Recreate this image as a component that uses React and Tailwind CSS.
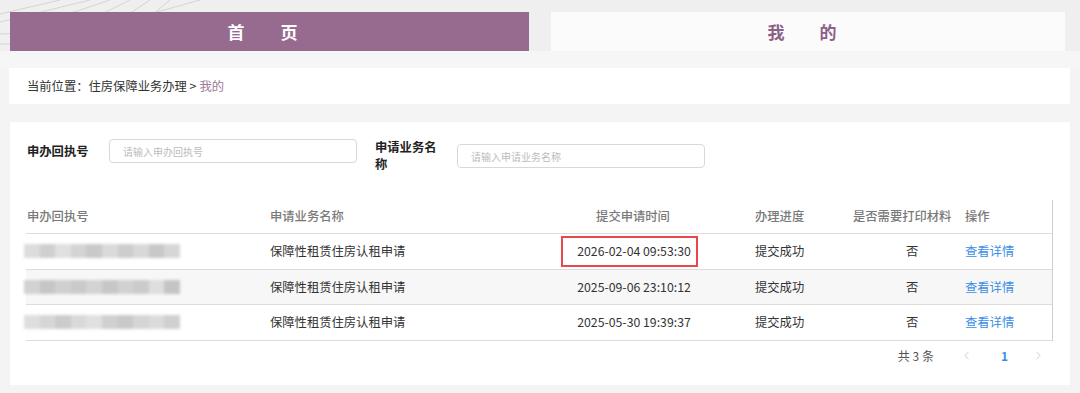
import { ChevronLeft, ChevronRight } from "lucide-react";

const rows = [
  { time: "2026-02-04 09:53:30", marked: true, stripe: false },
  { time: "2025-09-06 23:10:12", marked: false, stripe: true },
  { time: "2025-05-30 19:39:37", marked: false, stripe: false },
];

function Blurred({ shades }) {
  return (
    <div className="flex h-[14px] w-[156px] blur-[1.5px]">
      {shades.map((s, i) => (
        <div key={i} className="h-full flex-1" style={{ background: s }} />
      ))}
    </div>
  );
}

const shadeSets = [
  ["#dcdcdc", "#cfcfcf", "#e0e0e0", "#d4d4d4", "#c9c9c9", "#dadada", "#cdcdcd", "#d8d8d8", "#c8c8c8", "#d6d6d6"],
  ["#d2d2d2", "#c6c6c6", "#d0d0d0", "#cacaca", "#d3d3d3", "#c7c7c7", "#d1d1d1", "#cbcbcb", "#dedede", "#c4c4c4"],
  ["#dedede", "#d6d6d6", "#cccccc", "#d9d9d9", "#e0e0e0", "#d0d0d0", "#c9c9c9", "#d5d5d5", "#dbdbdb", "#d0d0d0"],
];

function HeaderBg() {
  return (
    <svg className="absolute inset-0 h-full w-full" viewBox="0 0 1080 68" preserveAspectRatio="none">
      <rect width="1080" height="68" fill="#efefef" />
      <g stroke="#d4d4d4" strokeWidth="1" fill="none">
        <path d="M0 14 L60 0" />
        <path d="M0 22 L90 0" />
        <path d="M20 30 L110 0" />
        <path d="M50 40 L130 0" />
        <path d="M80 46 L150 0" />
        <path d="M110 50 L170 0" />
        <path d="M0 34 L200 26" />
        <path d="M0 44 L200 40" />
        <path d="M150 14 L200 0" />
      </g>
      <rect x="0" y="51" width="1080" height="17" fill="#f6f6f6" />
    </svg>
  );
}

export default function App() {
  return (
    <div className="h-[393px] w-[1080px] overflow-hidden bg-[#f4f4f4] text-[12px] text-[#333] font-['Noto_Sans_CJK_SC','Noto_Sans',sans-serif]">
      <div className="relative h-[68px]">
        <HeaderBg />
        <div className="relative flex gap-[22px] px-[10px] pt-[12px]">
          <div className="flex h-[39px] w-[519px] items-center justify-center bg-[#966b8f] pr-[14px] text-[17px] font-bold text-white">
            <span>首</span>
            <span className="ml-[36px]">页</span>
          </div>
          <div className="flex h-[39px] w-[514px] items-center justify-center bg-[#fbfbfb] pr-[12px] text-[17px] font-bold text-[#8c6187]">
            <span>我</span>
            <span className="ml-[35px]">的</span>
          </div>
        </div>
      </div>

      <div className="ml-[9px] flex h-[36px] w-[1061px] items-center bg-white pl-[18px] text-[12.3px]">
        当前位置：住房保障业务办理 &gt; <span className="ml-[3px] text-[#9b7a98]">我的</span>
      </div>

      <div className="ml-[10px] mt-[18px] h-[263px] w-[1060px] bg-white px-[16px] pt-[17px]">
        <div className="flex items-start gap-[18px] pl-[1px]">
          <div className="flex items-center">
            <div className="w-[82px] text-[12.3px] font-bold text-[#222]">申办回执号</div>
            <div className="flex h-[24px] w-[248px] items-center rounded-[4px] border border-[#d8d8d8] pl-[13px] text-[10px] text-[#bcbcbc]">
              请输入申办回执号
            </div>
          </div>
          <div className="flex items-center">
            <div className="w-[82px] pr-[16px] text-[12.3px] font-bold leading-[17px] text-[#222]">申请业务名称</div>
            <div className="flex h-[24px] w-[248px] items-center rounded-[4px] border border-[#d8d8d8] pl-[13px] text-[10px] text-[#bcbcbc]">
              请输入申请业务名称
            </div>
          </div>
        </div>

        <div className="mt-[27px] w-[1027px] border-r border-[#cfcfcf]">
          <div className="flex h-[34px] items-center border-b border-[#dcdcdc] text-[12.3px] font-medium text-[#7a7a7a]">
            <div className="w-[244px] pl-[1px]">申办回执号</div>
            <div className="w-[276px]">申请业务名称</div>
            <div className="w-[174px] text-center">提交申请时间</div>
            <div className="w-[133px] pl-[35px]">办理进度</div>
            <div className="w-[112px]">是否需要打印材料</div>
            <div className="flex-1">操作</div>
          </div>
          {rows.map((r, i) => (
            <div
              key={r.time}
              className={`flex h-[35.5px] items-center border-b border-[#dcdcdc] text-[12.3px] ${r.stripe ? "bg-[#f7f7f7]" : "bg-white"}`}
            >
              <div className="w-[244px]">
                <div className="-ml-[2px]">
                  <Blurred shades={shadeSets[i]} />
                </div>
              </div>
              <div className="w-[276px]">保障性租赁住房认租申请</div>
              <div className="flex w-[174px] justify-center">
                <div
                  className={`-ml-[7px] flex h-[31px] items-center pl-[14px] pr-[5px] border-2 ${r.marked ? "border-[#e8474b]" : "border-transparent"}`}
                >
                  {r.time}
                </div>
              </div>
              <div className="w-[133px] pl-[35px]">提交成功</div>
              <div className="w-[112px] pl-[53px]">否</div>
              <div className="flex-1 text-[#3d8fe6]">查看详情</div>
            </div>
          ))}
        </div>

        <div className="mt-[5px] flex h-[20px] w-[1027px] items-center justify-end text-[12px] text-[#555]">
          <span>共 3 条</span>
          <ChevronLeft className="ml-[26px] h-[13px] w-[13px] text-[#c4c4c4]" strokeWidth={1.5} />
          <span className="ml-[28px] font-bold text-[#3d8fe6]">1</span>
          <ChevronRight className="ml-[24px] mr-[8px] h-[13px] w-[13px] text-[#c4c4c4]" strokeWidth={1.5} />
        </div>
      </div>
    </div>
  );
}
